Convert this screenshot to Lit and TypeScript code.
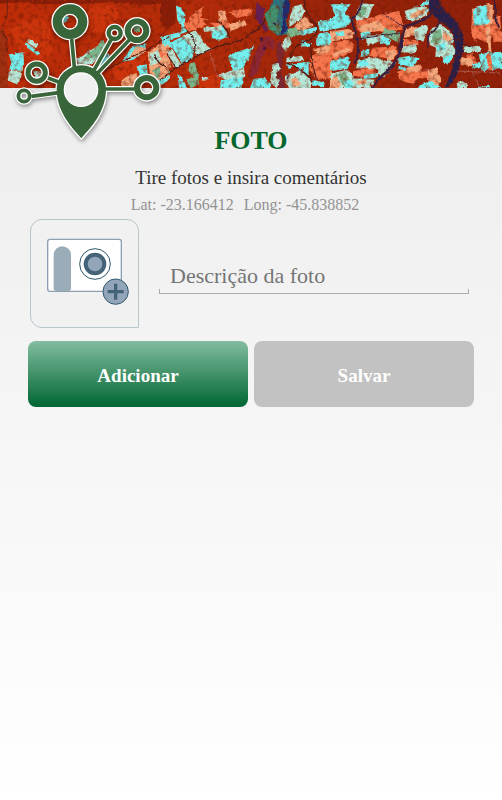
import { LitElement, html, svg, css } from "lit";
import { customElement, state } from "lit/decorators.js";

type Patch = [string, string];

const C = "#72efee";
const P = "#b5e6d6";
const S = "#f5764c";
const O = "#f3a87c";
const G = "#7ab58c";
const D = "#8a1e08";
const R = "#cc350c";

// Field patches of the false-colour satellite strip, in three tiles.
const west: Patch[] = [
  [D, "0,0 510,0 500,10 440,16 330,8 240,12 120,14 60,8 0,12"],
  [R, "30,90 70,64 120,56 150,90 146,130 160,150 130,190 90,180 60,160 50,130"],
  [R, "262,30 300,14 340,18 356,40 340,76 300,100 270,90"],
  [R, "330,200 380,180 430,160 440,180 400,230 350,240"],
  ["#a03010", "0,80 18,110 24,266 0,266"],
  [C, "26,164 70,158 72,186 60,214 28,210 34,188"],
  [P, "30,210 58,216 70,196 62,240 50,254 22,242"],
  [C, "78,128 118,158 114,168 74,138"],
  [P, "86,118 116,132 108,146 84,130"],
  [C, "186,54 204,48 206,64 190,70"],
  [P, "228,180 262,158 298,136 330,130 312,160 280,190 240,200"],
  [G, "250,176 290,140 308,120 316,134 290,176"],
  [C, "292,196 320,160 330,170 306,206"],
  [C, "366,186 396,140 436,130 438,152 400,180"],
  [G, "398,80 418,76 420,96 404,100"],
  [O, "410,140 438,146 436,158 380,182"],
  [C, "410,200 440,194 444,228 418,232"],
  [O, "366,236 410,220 420,262 362,264"],
  [O, "442,158 510,116 510,240 480,256 450,226"],
  [P, "446,166 476,150 482,186 452,198"],
  [C, "484,120 510,108 510,134 490,140"],
  [S, "478,154 510,142 510,168 486,180"],
  [G, "456,214 490,192 510,204 510,222 470,236"],
  [C, "474,242 510,226 510,238 484,256"],
  [P, "100,214 130,216 126,240 106,238"],
];
const middle: Patch[] = [
  [D, "0,0 50,0 46,70 20,90 0,60"],
  [R, "120,240 150,228 180,224 190,240 184,266 110,266"],
  [C, "48,18 62,22 76,46 74,84 82,96 60,104 66,84 52,60"],
  [C, "0,112 58,98 62,110 10,126"],
  [C, "22,132 70,110 104,152 94,180 66,194 48,160"],
  [P, "68,108 106,92 122,112 134,132 156,150 108,168 96,138"],
  [O, "0,146 22,136 56,196 40,202 18,156 8,160"],
  [O, "0,180 16,164 34,200 22,222 0,236"],
  [P, "20,156 36,150 66,198 44,206"],
  [S, "70,70 128,62 140,76 84,96"],
  [S, "150,70 200,62 216,84 176,88"],
  [O, "174,34 192,30 202,62 178,66"],
  [O, "206,74 254,60 260,76 212,94"],
  [C, "154,98 188,78 206,112 178,120 156,116"],
  [P, "130,84 182,80 184,94 132,96"],
  [S, "206,38 274,26 276,42 232,56"],
  [S, "86,54 132,18 120,54 150,60 92,72"],
  [C, "204,166 282,140 268,172 250,206 216,214 210,188"],
  [P, "174,228 210,214 252,208 256,232 198,240"],
  [C, "182,242 250,230 244,266 180,266"],
  [G, "86,192 104,188 118,224 110,248 96,222 82,212"],
  [C, "52,224 66,232 82,266 58,266"],
  [G, "80,238 114,230 118,254 96,264 84,256"],
  [P, "122,234 142,232 146,240 126,244"],
  ["#2c7480", "324,36 340,0 390,0 380,52 382,104 350,108 328,82"],
  ["#42906e", "314,42 346,14 356,24 350,66 370,92 352,104 326,88"],
  ["#202b70", "372,4 390,0 388,44 376,62 382,88 362,110 366,70"],
  ["#661f54", "290,6 314,30 308,62 324,88 318,100 298,70 286,56"],
  ["#8c2634", "300,130 322,104 346,128 338,150 322,140 304,176 294,216 266,240 274,190"],
  ["#7c2834", "350,130 362,122 372,160 364,218 376,266 354,266 350,206"],
  [P, "338,194 356,190 360,208 348,232 360,242 350,266 330,248"],
  [C, "280,238 312,234 334,254 330,266 270,266"],
  [P, "402,20 424,14 434,34 424,58 388,82 390,50"],
  [O, "404,78 436,50 460,78 430,92 406,90"],
  [G, "382,88 406,82 424,104 394,114 382,106"],
  [C, "416,94 468,82 470,96 426,108"],
  [C, "472,66 516,58 516,88 480,94"],
  [C, "470,106 500,96 516,106 516,140 468,136"],
  [P, "370,118 386,110 396,126 378,156 366,142"],
  [C, "424,124 434,120 440,132 456,130 450,142 424,140"],
  [P, "380,174 424,168 432,184 378,188"],
  [C, "380,194 446,186 446,226 432,226 430,200 418,218 408,198 386,208"],
  [S, "452,170 516,142 516,236 470,240 448,210"],
  [O, "458,150 516,132 516,154 474,164"],
  [P, "372,230 424,214 454,242 452,266 384,266"],
  [C, "456,240 494,250 492,260 456,258"],
  [O, "392,240 408,232 422,256 404,262"],
];
const east: Patch[] = [
  [C, "4,14 62,14 44,40 68,58 52,82 0,90 0,54 14,48"],
  [P, "70,52 94,10 130,14 116,52 84,68"],
  [G, "80,46 98,18 112,24 98,56"],
  [O, "0,94 56,88 76,98 68,116 0,126"],
  [C, "16,98 40,94 44,104 20,112"],
  [S, "0,130 60,120 72,136 66,158 16,180 0,174"],
  [O, "8,160 60,144 64,152 10,172"],
  [C, "0,184 56,170 62,186 52,208 0,214"],
  [S, "78,66 154,44 208,34 220,78 214,90 166,94 84,98"],
  [O, "86,78 148,62 164,88 96,102"],
  [C, "90,100 118,94 126,110 96,120"],
  [P, "108,110 158,104 168,122 110,136"],
  [G, "160,84 210,98 208,130 176,114 156,108"],
  [C, "156,106 184,122 174,138 150,130"],
  [S, "130,144 198,140 204,160 188,178 116,168"],
  [O, "164,154 198,150 190,174 172,182"],
  [C, "94,154 118,150 118,166 92,172"],
  [P, "84,180 134,172 168,184 148,210 78,206"],
  [C, "84,184 106,178 118,196 90,200"],
  [S, "70,214 126,206 138,218 116,234 68,228"],
  [C, "104,226 144,220 138,234 100,238"],
  [P, "0,222 50,210 76,236 134,240 118,266 0,266"],
  [G, "20,226 44,216 66,254 44,264"],
  [O, "0,240 16,228 34,254 24,266 0,266"],
  [C, "40,244 62,240 72,264 48,266"],
  [O, "80,244 108,238 110,250 82,256"],
  [P, "150,190 178,182 200,188 162,232 142,226"],
  [P, "224,34 272,18 300,28 286,48 246,66 230,58"],
  [O, "240,44 286,24 282,44 244,58"],
  [C, "268,12 300,0 300,14 276,20"],
  [O, "224,88 260,78 270,106 222,114"],
  [P, "252,88 292,74 294,88 280,126 256,118"],
  [S, "218,118 264,122 266,138 214,136"],
  [P, "218,140 262,136 254,160 214,158"],
  [C, "204,174 240,168 266,176 250,204 206,192"],
  [S, "202,216 272,194 278,212 254,252 226,248 204,236"],
  [O, "228,204 270,194 274,210 232,220"],
  [C, "228,204 206,198 206,208 228,214"],
  [O, "290,212 320,204 334,240 328,264 292,240"],
  [S, "264,218 294,214 296,234 262,236"],
  [P, "306,86 332,72 354,92 374,118 366,136 378,156 354,196 336,174 316,170 318,144 300,136 294,110"],
  [G, "308,94 332,88 336,110 326,134 302,128"],
  [C, "318,140 340,130 346,148 324,156"],
  [C, "342,170 370,166 356,194 338,188"],
  [O, "340,94 368,116 352,126 336,114"],
  [O, "426,28 478,12 488,18 488,90 426,82"],
  [S, "422,80 490,76 492,108 474,130 436,114"],
  [S, "488,58 510,46 516,124 490,128"],
  [O, "466,84 480,80 484,156 474,158"],
  [S, "426,28 436,24 440,128 424,108"],
  [C, "428,28 470,16 478,72 432,78"],
  [P, "402,140 450,138 452,156 400,158"],
  [C, "446,164 484,158 516,156 516,208 458,214"],
  [S, "470,166 482,162 488,210 474,212"],
  [S, "408,164 428,158 440,192 410,186"],
  [O, "392,172 430,180 428,200 392,196"],
  [C, "426,192 452,190 452,202 430,206"],
  [P, "380,250 400,244 412,252 410,266 382,266"],
  [C, "270,256 300,244 332,262 332,266 264,266"],
  [C, "446,262 480,258 478,266 440,266"],
];

const tile = (patches: Patch[]) =>
  patches.map(([fill, points]) => svg`<polygon fill=${fill} points=${points}></polygon>`);

@customElement("satellite-strip")
class SatelliteStrip extends LitElement {
  static styles = css`
    :host { display: block; background: #a02608; }
    .strip { display: block; width: 100%; height: 100%; }
  `;

  render() {
    return html`
      <svg class="strip" viewBox="0 0 1506 266" preserveAspectRatio="xMidYMid slice" aria-hidden="true">
        <defs>
          <linearGradient id="soil">
            <stop offset="0" stop-color="#bf2d08"></stop>
            <stop offset=".4" stop-color="#b42c09"></stop>
            <stop offset=".65" stop-color="#98240a"></stop>
            <stop offset="1" stop-color="#902009"></stop>
          </linearGradient>
          <filter id="rough" x="-2%" y="-8%" width="104%" height="116%" color-interpolation-filters="sRGB">
            <feTurbulence type="fractalNoise" baseFrequency=".07" numOctaves="3" seed="4" result="n"></feTurbulence>
            <feDisplacementMap in="SourceGraphic" in2="n" scale="10" xChannelSelector="R" yChannelSelector="G" result="d"></feDisplacementMap>
            <feColorMatrix in="n" type="matrix" values="0 0 0 0 .45  0 0 0 0 .1  0 0 0 0 .02  1.6 0 0 0 -.75" result="g"></feColorMatrix>
            <feMerge><feMergeNode in="d"></feMergeNode><feMergeNode in="g"></feMergeNode></feMerge>
          </filter>
        </defs>
        <g filter="url(#rough)">
          <rect x="-20" y="-20" width="1546" height="306" fill="url(#soil)"></rect>
          <g>${tile(west)}</g>
          <g transform="translate(480 0)">${tile(middle)}</g>
          <g transform="translate(990 0)">${tile(east)}</g>
          <g fill="none" stroke="#4d1c18" stroke-width="4">
            <path d="M20 0 Q30 50 6 80 Q22 120 24 160" stroke-width="2"></path>
            <path d="M300 218 L440 150 L510 110" stroke-width="3"></path>
            <path d="M460 164 L478 190 L500 206"></path>
            <path d="M480 242 Q530 200 580 176 Q620 150 680 132 Q730 126 750 102 Q780 92 796 60"></path>
            <path d="M560 92 Q590 120 584 160 M650 60 L680 90 L690 116 M500 160 L526 204"></path>
            <path d="M912 0 Q916 50 944 70 Q962 94 930 120 Q880 130 870 180 M930 130 L936 190 L950 240"></path>
            <path d="M860 190 Q900 200 940 246"></path>
          </g>
          <g fill="none" stroke="#342043" stroke-linejoin="round">
            <path stroke-width="6" d="M1088 0 Q1080 40 1054 58 Q1062 90 1072 116 Q1080 160 1062 192"></path>
            <path stroke-width="8" d="M1300 40 Q1260 70 1216 80 Q1204 110 1200 150 Q1190 190 1160 216 Q1130 240 1116 266"></path>
            <path stroke-width="5" d="M1318 50 Q1322 84 1288 104 Q1280 120 1284 144"></path>
            <path stroke-width="3" d="M1376 130 L1420 140 M1060 120 L1200 100 M1150 40 L1212 84"></path>
            <path stroke-width="6" d="M1480 0 Q1490 30 1486 60 L1498 84"></path>
          </g>
          <path fill="#28204a" d="M1288 -9 H1318 Q1324 30 1348 42 Q1374 64 1386 96 Q1396 140 1382 180 Q1378 220 1356 250 L1346 266 H1328 Q1350 240 1356 206 Q1372 160 1362 124 Q1360 90 1330 72 Q1300 50 1286 32 Z"></path>
          <g fill="#2a1662">
            <circle cx="785" cy="118" r="5"></circle>
            <circle cx="794" cy="146" r="5"></circle>
            <circle cx="824" cy="74" r="4"></circle>
            <circle cx="866" cy="230" r="4"></circle>
          </g>
          <path fill="none" stroke="#b87370" stroke-width="2" d="M1370 214 L1500 220 M1416 216 L1440 266 M630 160 L656 240 M1250 216 L1300 206"></path>
        </g>
      </svg>
    `;
  }
}

@customElement("pin-logo")
class PinLogo extends LitElement {
  static styles = css`
    :host { display: block; }
    .logo { display: block; width: 100%; filter: drop-shadow(1px 2px 2px #0006); }
  `;

  // Centre x, centre y, radius and band width of each node.
  private rings = [
    [208, 63, 38, 28],
    [342, 97, 18, 13],
    [409, 90, 28, 18],
    [108, 216, 26, 15],
    [70, 286, 17, 11],
    [438, 261, 29, 18],
  ];

  render() {
    const links = "M222 210 L213 115 M276 216 L332 116 M286 222 L388 116 M180 246 L142 232 M180 275 L92 287 M310 265 H402";
    const pin = "M242 413 C214 382 168 334 168 266 A74 72 0 0 1 316 266 C316 334 270 382 242 413 Z";
    return html`
      <svg class="logo" viewBox="-2 -2 510 450" role="img" aria-label="Pin">
        <g fill="none" stroke="#fff">
          <path stroke-width="18" d=${links}></path>
          <path stroke-width="8" stroke-linejoin="round" d=${pin}></path>
          ${this.rings.map(([x, y, r, w]) => svg`<circle cx=${x} cy=${y} r=${r} stroke-width=${w + 8}></circle>`)}
        </g>
        <path fill="none" stroke="#386539" stroke-width="11" d=${links}></path>
        <path fill="#386539" d=${pin}></path>
        <g fill="none" stroke="#386539">
          ${this.rings.map(([x, y, r, w]) => svg`<circle cx=${x} cy=${y} r=${r} stroke-width=${w}></circle>`)}
        </g>
        <circle cx="241" cy="267" r="50" fill="#efefef" stroke="#fff" stroke-width="4"></circle>
      </svg>
    `;
  }
}

@customElement("app-root")
class AppRoot extends LitElement {
  static styles = css`
    :host {
      display: block;
      box-sizing: border-box;
      min-height: 100vh;
      background: linear-gradient(#ebebeb, #fff);
      font-family: "Liberation Serif", "Times New Roman", serif;
    }
    .header { position: relative; height: 88px; }
    .strip { height: 100%; }
    .logo { position: absolute; left: 0; top: 0; width: 170px; }
    .intro { padding: 37px 28px 0; text-align: center; }
    h1 { margin: 0; font-size: 26px; line-height: 32px; color: #04662c; }
    .lead { margin: 9px 0 0; font-size: 19px; line-height: 24px; color: #333; }
    .coords {
      display: flex; justify-content: center; gap: 10px;
      margin: 4px 12px 0 0; font-size: 16px; line-height: 22px; color: #939393;
    }
    form { padding: 3px 28px 28px; }
    .entry { display: flex; align-items: center; gap: 20px; padding: 0 5px 0 2px; }
    button { font: inherit; padding: 0; cursor: pointer; }
    .photo {
      flex: none; box-sizing: border-box; width: 109px; height: 109px;
      border: 1px solid #b9c4cb; border-radius: 12px 12px 0 12px; background: #f1f1f1;
    }
    .camera { display: block; width: 107px; height: 107px; }
    .description {
      flex: 1; min-width: 0; box-sizing: border-box; height: 38px; margin-top: 2px;
      padding: 4px 11px 0; border: 0; border-radius: 0; border-bottom: 1px solid #a9aeaa;
      background:
        linear-gradient(#a9aeaa, #a9aeaa) left bottom / 1px 4px no-repeat,
        linear-gradient(#a9aeaa, #a9aeaa) right bottom / 1px 4px no-repeat;
      font: inherit; font-size: 22px; color: #333; outline: none;
    }
    .description::placeholder { color: #757575; opacity: 1; }
    .actions { display: grid; grid-template-columns: 1fr 1fr; gap: 6px; margin-top: 13px; }
    .action {
      height: 66px; border: 0; border-radius: 8px;
      font-size: 19px; font-weight: bold; color: #fff; padding-top: 3px;
    }
    .add { background: linear-gradient(#82bd9f, #006633); }
    .save { background: #c2c2c2; cursor: default; }
  `;

  @state() private description = "";

  private onInput(event: Event) {
    this.description = (event.target as HTMLInputElement).value;
  }

  render() {
    return html`
      <header class="header">
        <satellite-strip class="strip"></satellite-strip>
        <pin-logo class="logo"></pin-logo>
      </header>
      <main>
        <section class="intro">
          <h1>FOTO</h1>
          <p class="lead">Tire fotos e insira comentários</p>
          <p class="coords"><span>Lat: -23.166412</span><span>Long: -45.838852</span></p>
        </section>
        <form @submit=${(event: Event) => event.preventDefault()}>
          <div class="entry">
            <button class="photo" type="button" aria-label="Tirar foto">
              <svg class="camera" viewBox="33 31 321 321" aria-hidden="true">
                <rect x="83" y="89" width="221" height="156" rx="7" fill="#fff" stroke="#8ca0b3" stroke-width="4"></rect>
                <path fill="#9aacb8" d="M101 136 A26 26 0 0 1 153 136 V236 Q153 244 145 244 H109 Q101 244 101 236 Z"></path>
                <circle cx="225" cy="163" r="46" fill="#fff" stroke="#31586e" stroke-width="3"></circle>
                <circle cx="225" cy="163" r="28" fill="#92a5b9" stroke="#456378" stroke-width="12"></circle>
                <circle cx="287" cy="246" r="38" fill="#92a5b9" stroke="#31586e" stroke-width="3"></circle>
                <path stroke="#456378" stroke-width="10" d="M287 222 V270 M263 246 H311"></path>
              </svg>
            </button>
            <input class="description" type="text" aria-label="Descrição da foto"
              placeholder="Descrição da foto" .value=${this.description} @input=${this.onInput} />
          </div>
          <div class="actions">
            <button class="action add" type="button">Adicionar</button>
            <button class="action save" type="submit">Salvar</button>
          </div>
        </form>
      </main>
    `;
  }
}
